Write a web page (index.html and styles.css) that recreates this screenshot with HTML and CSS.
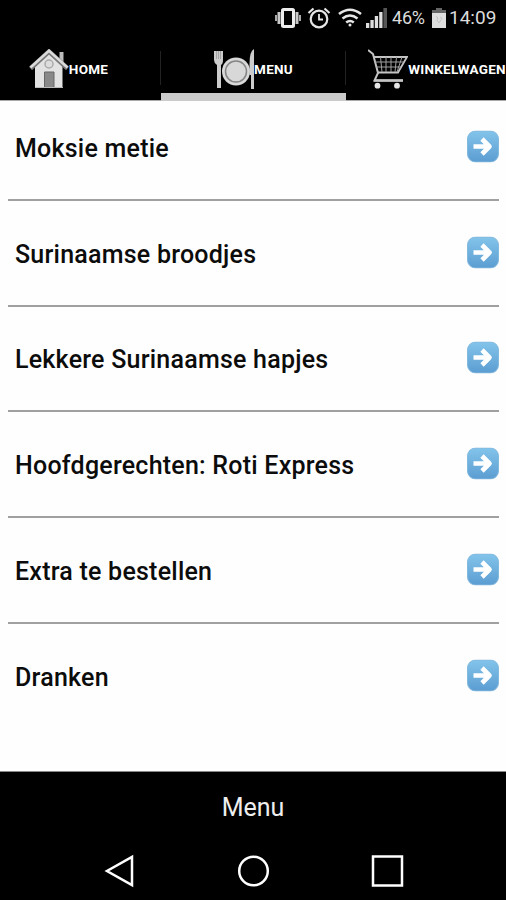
FILE: index.html
```html
<!DOCTYPE html>
<html lang="nl">
<head>
    <meta charset="UTF-8">
    <meta name="viewport" content="width=device-width, initial-scale=1.0">
    <title>Menu</title>
    <link rel="stylesheet" href="styles.css">
</head>
<body>
    <!-- Status bar -->
    <div class="status-bar">
        <svg class="status-vibrate" width="28" height="24" viewBox="0 0 28 24">
            <rect x="8.5" y="3.5" width="11" height="17" rx="1" fill="none" stroke="#ececec" stroke-width="3"/>
            <path d="M5 6v12M23 6v12" stroke="#c8c8c8" stroke-width="3"/>
            <path d="M2 9v6M26 9v6" stroke="#aaa" stroke-width="2"/>
        </svg>
        <svg class="status-alarm" width="24" height="24" viewBox="0 0 24 24" fill="none" stroke="#e6e6e6">
            <circle cx="12" cy="13" r="8.3" stroke-width="2.2"/>
            <path d="M1.5 7l5-4.5M22.5 7l-5-4.5" stroke-width="2.2"/>
            <path d="M12 8v5.5h4" stroke-width="1.8"/>
        </svg>
        <svg class="status-wifi" width="24" height="20" viewBox="0 0 24 20" fill="none" stroke="#e6e6e6" stroke-width="2.6">
            <path d="M1 6q11-8.500 22 0M4.500 10.500q7.500-6 15 0M8.200 14.500q3.800-3 7.600 0"/>
            <circle cx="12" cy="17" r="1.500" fill="#e6e6e6" stroke="none"/>
        </svg>
        <svg class="status-signal" width="21" height="20" viewBox="0 0 21 20" fill="#dedede">
            <path d="M0 15h3.300v5H0zM4.400 12h3.300v8H4.400zM8.800 8h3.300v12H8.800zM13.200 4h3.300v16h-3.300z"/>
            <path d="M17.400 0H21v20h-3.600z" fill="#555"/>
        </svg>
        <span class="status-percent">46%</span>
        <svg class="status-battery" width="14" height="20" viewBox="0 0 14 20">
            <path d="M4 0h6v2h4v4H0V2h4z" fill="#666"/>
            <path d="M0 5h14v15H0z" fill="#dedede"/>
            <path d="M4 8l2 2-1 2 2 3 3-5-2-1" fill="none" stroke="#c4c4c4"/>
        </svg>
        <span class="status-time">14:09</span>
    </div>

    <!-- Tabs -->
    <div class="tabs">
        <div class="tab">
            <svg width="40" height="40" viewBox="0 0 40 40">
                <path d="M30.500 3h4v12h-4z" fill="#bbb"/>
                <path d="M6 17L20 4l13.500 13v22H6z" fill="#e2e2e2"/>
                <path d="M1.500 19.500L20 2.500l18.500 17" fill="none" stroke="#777" stroke-width="4.500"/>
                <path d="M1.500 18.500L20 1.800l18.500 16.700" fill="none" stroke="#dcdcdc" stroke-width="2.500"/>
                <circle cx="20" cy="15" r="4" fill="#ddd" stroke="#aaa" stroke-width="1.500"/>
                <path d="M15.500 23h9.500v15.500h-9.500z" fill="#888" stroke="#666"/>
                <path d="M6 38.500h28" stroke="#bbb"/>
            </svg>
            <span>HOME</span>
        </div>
        <div class="tab active">
            <svg width="40" height="40" viewBox="0 0 40 40">
                <path d="M0 2h9v9q0 4-2 5v23H3V16q-3-2-3-5z" fill="#ccc"/>
                <path d="M2.500 2v8M4.500 2v8M6.500 2v8" stroke="#888" stroke-width=".6"/>
                <circle cx="22" cy="22.500" r="14" fill="#d8d8d8"/>
                <circle cx="22" cy="22.500" r="10.500" fill="#d8d8d8" stroke="#858585" stroke-width="1.500"/>
                <path d="M35.500 15q0-13 4.500-15v40h-3V26h-1.500z" fill="#ccc"/>
            </svg>
            <span>MENU</span>
        </div>
        <div class="tab">
            <svg width="40" height="40" viewBox="0 0 40 40" fill="none" stroke="#c4c4c4">
                <path d="M0 1l5 4 5 19-3.500 7.500H35" stroke-width="2"/>
                <path d="M6 8h33l-9 15.500H10" stroke-width="1.800"/>
                <path d="M7 13h29M8.500 18h24.500M12.500 8l1.500 15M18 8v15M23 8v15M28.500 8l-1.500 15M34 8l-5 15" stroke="#a0a0a0"/>
                <path d="M6 31.500h29" stroke-width="2.500"/>
                <circle cx="9.500" cy="36.700" r="2.900" fill="#e6e6e6" stroke="none"/>
                <circle cx="29" cy="36.700" r="2.900" fill="#e6e6e6" stroke="none"/>
            </svg>
            <span>WINKELWAGEN</span>
        </div>
    </div>

    <!-- Categories -->
    <ul class="menu-list">
        <li class="menu-item">
            <span>Moksie metie</span>
            <svg class="arrow" viewBox="0 0 32 32"><use href="#arrow"/></svg>
        </li>
        <li class="menu-item">
            <span>Surinaamse broodjes</span>
            <svg class="arrow" viewBox="0 0 32 32"><use href="#arrow"/></svg>
        </li>
        <li class="menu-item">
            <span>Lekkere Surinaamse hapjes</span>
            <svg class="arrow" viewBox="0 0 32 32"><use href="#arrow"/></svg>
        </li>
        <li class="menu-item">
            <span>Hoofdgerechten: Roti Express</span>
            <svg class="arrow" viewBox="0 0 32 32"><use href="#arrow"/></svg>
        </li>
        <li class="menu-item">
            <span>Extra te bestellen</span>
            <svg class="arrow" viewBox="0 0 32 32"><use href="#arrow"/></svg>
        </li>
        <li class="menu-item">
            <span>Dranken</span>
            <svg class="arrow" viewBox="0 0 32 32"><use href="#arrow"/></svg>
        </li>
    </ul>

    <div class="footer">Menu</div>

    <!-- Android navigation -->
    <div class="nav-bar">
        <svg width="34" height="34" viewBox="0 0 34 34"><path d="M30 3v28L5 17z"/></svg>
        <svg width="34" height="34" viewBox="0 0 34 34"><circle cx="17.500" cy="17" r="14.300"/></svg>
        <svg width="34" height="34" viewBox="0 0 34 34"><path d="M3 2.500h29v29H3z"/></svg>
    </div>

    <svg width="0" height="0" class="defs">
        <defs>
            <linearGradient id="blue" x1="0" y1="0" x2="0" y2="1">
                <stop offset="0" stop-color="#82c4ea"/>
                <stop offset="1" stop-color="#5c9dd2"/>
            </linearGradient>
            <symbol id="arrow" viewBox="0 0 32 32">
                <rect x=".5" y=".5" width="31" height="31" rx="8" fill="url(#blue)" stroke="#84b9de"/>
                <path d="M6.500 16h15M15 8.500l7.500 7.500-7.500 7.500" fill="none" stroke="#fff" stroke-width="4.600" stroke-linejoin="round"/>
            </symbol>
        </defs>
    </svg>
</body>
</html>
```
FILE: styles.css
```css
* {
    margin: 0;
    padding: 0;
    box-sizing: border-box;
}

body {
    font-family: Roboto, 'Liberation Sans', sans-serif;
    background-color: #fefefe;
    width: 506px;
    height: 900px;
    overflow: hidden;
    display: flex;
    flex-direction: column;
}

svg {
    flex-shrink: 0;
}

/* Status bar */
.status-bar {
    height: 36px;
    background-color: #000;
    color: #dcdcdc;
    font-size: 18px;
    line-height: 36px;
    display: flex;
    align-items: center;
    justify-content: flex-end;
    padding-right: 9px;
}

.status-alarm {
    margin-left: 5px;
}

.status-wifi {
    margin-left: 7px;
}

.status-signal {
    margin-left: 4px;
}

.status-percent {
    margin-left: 5px;
    width: 35px;
    letter-spacing: -0.2px;
}

.status-battery {
    margin-left: 5px;
}

.status-time {
    margin-left: 3px;
    width: 48px;
    font-size: 19px;
}

/* Tabs */
.tabs {
    height: 65px;
    margin-left: -24px;
    width: 555px;
    background-color: #000;
    border-bottom: 1px solid #aaa;
    display: flex;
}

.tab {
    width: 185px;
    height: 65px;
    flex-shrink: 0;
    display: flex;
    align-items: center;
    justify-content: center;
    color: #fff;
    font-size: 13.5px;
    font-weight: 700;
    letter-spacing: 0.25px;
    background: linear-gradient(#222, #222) right 15px / 1px 34px no-repeat;
}

.tab:last-child {
    padding-right: 3px;
}

.tab.active {
    border-bottom: 8px solid #cbcbcb;
    padding-top: 8px;
}

/* Categories */
.menu-list {
    flex: 1;
    list-style: none;
    padding: 0 7px 0 8px;
}

.menu-item {
    height: 105.8px;
    display: flex;
    align-items: center;
    justify-content: space-between;
    padding: 0 0 1.4px 7px;
    border-bottom: 2px solid #a0a0a0;
    color: #0c0c0c;
    font-size: 25px;
    font-weight: 500;
    letter-spacing: 0.23px;
}

.menu-item:first-child {
    height: 99.8px;
    padding-bottom: 7px;
}

.menu-item:last-child {
    border-bottom: none;
    padding-bottom: 3px;
}

.menu-item span {
    position: relative;
    top: 2px;
}

.arrow {
    width: 32px;
    height: 33px;
}

/* Bottom */
.footer {
    height: 71px;
    background-color: #000;
    border-top: 1px solid #888;
    color: #eee;
    font-size: 25px;
    line-height: 71px;
    text-align: center;
}

.nav-bar {
    height: 58px;
    background-color: #000;
    display: flex;
    justify-content: center;
    gap: 100px;
    fill: none;
    stroke: #fff;
    stroke-width: 2.5px;
    padding-top: 12px;
}

.defs {
    position: absolute;
}
```
